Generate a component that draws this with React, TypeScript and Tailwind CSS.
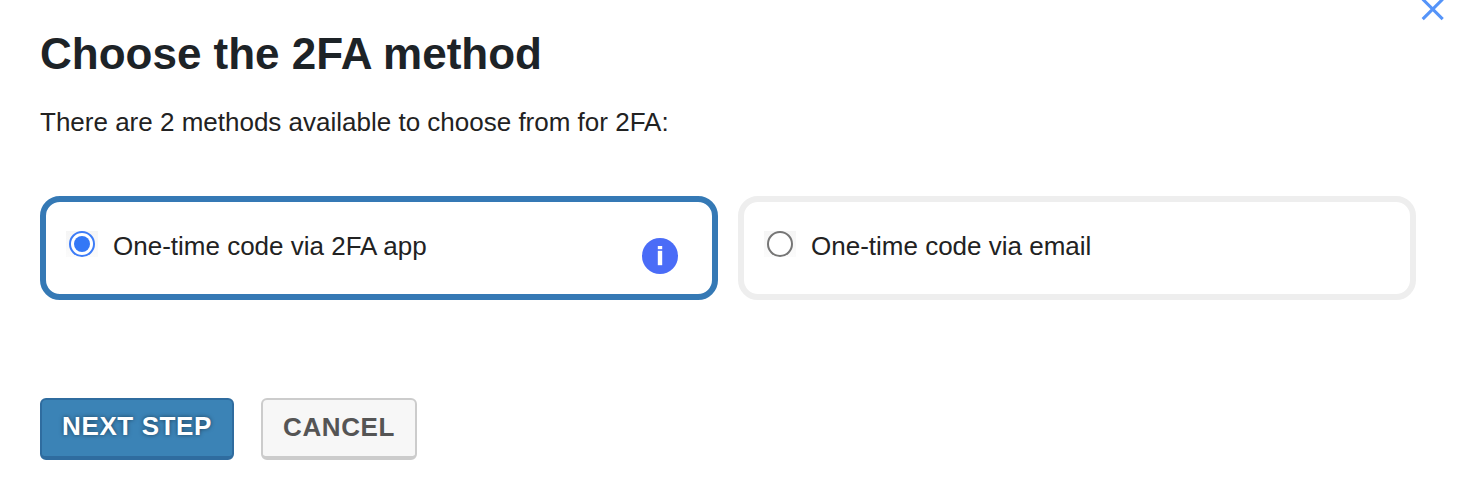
import clsx from "clsx";

type Method = { id: string; label: string; hint?: boolean };

const METHODS: Method[] = [
  { id: "app", label: "One-time code via 2FA app", hint: true },
  { id: "email", label: "One-time code via email" },
];

function CloseIcon() {
  return (
    <svg viewBox="0 0 24 24" className="h-6 w-6" aria-hidden>
      <path d="M1.7 1.2 L21.7 21.2 M21.7 1.2 L1.7 21.2" fill="none" stroke="#5594f9" strokeWidth="3.1" />
    </svg>
  );
}

function RadioMark({ checked }: { checked: boolean }) {
  return (
    <span className="mt-[9px] flex h-[26px] w-8 shrink-0 items-center justify-center bg-linear-to-b from-[#f5f5f5] to-[#fbfbfb]">
      <span
        className={clsx(
          "flex h-[26px] w-[26px] items-center justify-center rounded-full border-2 bg-white",
          checked ? "border-[#3d7cf7]" : "border-[#767676]",
        )}
      >
        {checked && <span className="h-4 w-4 rounded-full bg-[#3478f6]" />}
      </span>
    </span>
  );
}

function InfoIcon() {
  return (
    <svg viewBox="0 0 36 36" className="mt-4 ml-auto h-9 w-9 shrink-0" aria-hidden>
      <circle cx="18" cy="18" r="18" fill="#4a6cf7" />
      <rect x="15.8" y="8" width="4.4" height="3.2" fill="#fff" />
      <rect x="15.8" y="12.8" width="4.4" height="14.4" fill="#fff" />
    </svg>
  );
}

function MethodCard({ method, selected }: { method: Method; selected: boolean }) {
  return (
    <label
      className={clsx(
        "flex h-[104px] w-[678px] items-start rounded-[20px] border-[6px] pt-5 pr-[34px] pl-5",
        selected ? "border-[#3579b5]" : "border-[#eeeeee]",
      )}
    >
      <RadioMark checked={selected} />
      <span className="ml-[15px] text-[26px] leading-[48px]">{method.label}</span>
      {method.hint && <InfoIcon />}
    </label>
  );
}

export default function App() {
  return (
    <main className="relative h-[494px] w-[1468px] overflow-hidden bg-white pl-10 font-['Liberation_Sans',Arial,sans-serif] text-[#222222]">
      <button className="absolute -top-0.5 right-[23px] h-6 w-6" aria-label="Close">
        <CloseIcon />
      </button>
      <h1 className="pt-[26px] text-[44px] leading-[56px] font-bold text-[#1d2327]">Choose the 2FA method</h1>
      <p className="mt-5 text-[26px] leading-10">There are 2 methods available to choose from for 2FA:</p>
      <div className="mt-[54px] flex gap-5">
        {METHODS.map((m) => (
          <MethodCard key={m.id} method={m} selected={m.id === "app"} />
        ))}
      </div>
      <div className="mt-[98px] flex gap-[27px]">
        <button className="h-[62px] w-[194px] rounded-[6px] border-2 border-b-4 border-[#2f6c9f] bg-[#3b83b6] pb-1 text-[26px] font-bold tracking-[0.6px] text-white [text-shadow:0_0_4px_rgba(0,0,0,0.5)]">
          NEXT STEP
        </button>
        <button className="h-[62px] w-[156px] rounded-[6px] border-2 border-b-4 border-[#cccccc] bg-[#f7f7f7] pb-0.5 text-[26px] font-bold tracking-[0.6px] text-[#555555]">
          CANCEL
        </button>
      </div>
    </main>
  );
}
